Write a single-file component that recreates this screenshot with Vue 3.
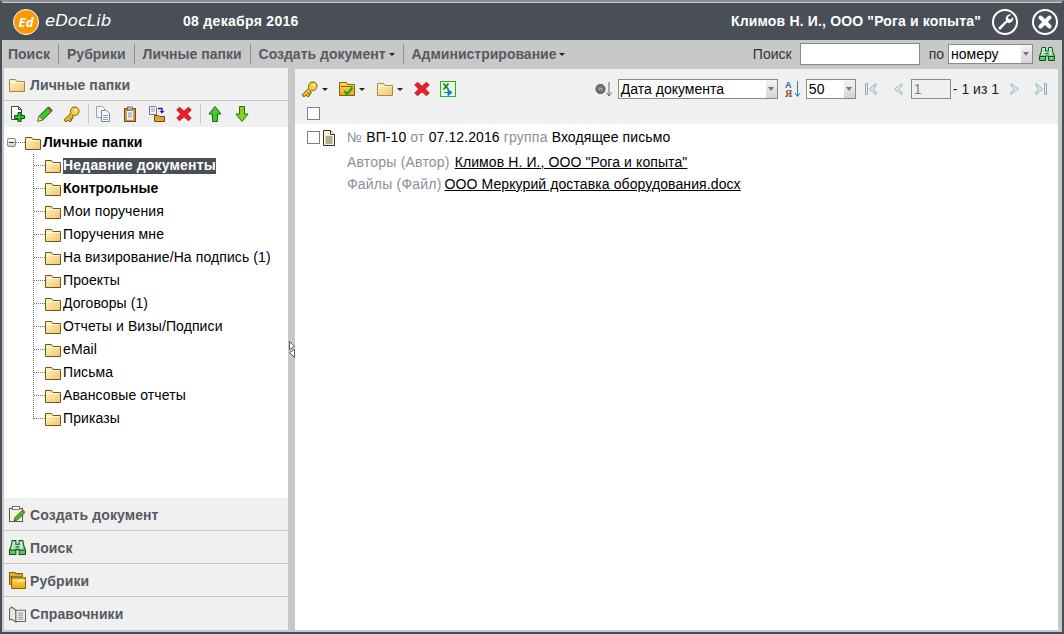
<script setup>
const folders = [
  { t: 'Недавние документы', c: 'sel' },
  { t: 'Контрольные', c: 'bold' },
  { t: 'Мои поручения' },
  { t: 'Поручения мне' },
  { t: 'На визирование/На подпись (1)' },
  { t: 'Проекты' },
  { t: 'Договоры (1)' },
  { t: 'Отчеты и Визы/Подписи' },
  { t: 'eMail' },
  { t: 'Письма' },
  { t: 'Авансовые отчеты' },
  { t: 'Приказы' }
]
const accordion = [
  { t: 'Создать документ', i: 'i-create' },
  { t: 'Поиск', i: 'i-bino' },
  { t: 'Рубрики', i: 'i-rubric' },
  { t: 'Справочники', i: 'i-book' }
]
</script>

<template>
  <div class="win">
    <svg class="sprite" aria-hidden="true">
      <defs>
        <linearGradient id="gf" x1="0" y1="0" x2="1" y2="1">
          <stop offset="0" stop-color="#fff6c0" />
          <stop offset="1" stop-color="#f4c470" />
        </linearGradient>
        <linearGradient id="gy" x1="0" y1="0" x2="0" y2="1">
          <stop offset="0" stop-color="#ffe25a" />
          <stop offset="1" stop-color="#e8a810" />
        </linearGradient>
        <linearGradient id="gb" x1="0" y1="0" x2="0" y2="1">
          <stop offset="0" stop-color="#d8f4dc" />
          <stop offset="1" stop-color="#58b868" />
        </linearGradient>
        <symbol id="i-folder" viewBox="0 0 16 16">
          <path d="M.5 14.500V2.500h6l1.500 2h7.500v10z" fill="url(#gf)" stroke="#6e5a18" />
          <path d="M1.500 5.500h13" stroke="#fffbe0" />
        </symbol>
        <symbol id="i-folder-light" viewBox="0 0 16 16">
          <path d="M.5 14.500V2.500h6l1.500 2h7.500v10z" fill="url(#gf)" stroke="#a08c48" />
          <path d="M1.500 5.500h13" stroke="#fffbe0" />
        </symbol>
        <symbol id="i-key" viewBox="0 0 16 16">
          <path d="M9 7L2 14M4 12l2 2M6 10l1.500 1.500" fill="none" stroke="#7a5c08" stroke-width="3.600" stroke-linecap="square" />
          <circle cx="10.800" cy="5.200" r="4.700" fill="#7a5c08" />
          <path d="M9 7L2 14M4 12l2 2M6 10l1.500 1.500" fill="none" stroke="#f2c22e" stroke-width="1.800" stroke-linecap="square" />
          <circle cx="10.800" cy="5.200" r="3.800" fill="#f7cf3e" />
          <circle cx="11.800" cy="4.200" r="1.200" fill="#fff6c4" />
        </symbol>
        <symbol id="i-pageplus" viewBox="0 0 16 16">
          <path d="M1.500 .5h7l3 3v10h-10z" fill="#fff" stroke="#444" />
          <path d="M8.500 .5v3h3" fill="none" stroke="#444" />
          <path d="M8 6.500h3v3h3.500v3H11V16H8v-3.500H4.500v-3H8z" fill="#2fc02f" stroke="#0a5a0a" />
        </symbol>
        <symbol id="i-pencil" viewBox="0 0 16 16">
          <path d="M.8 15.200l1.200-5L11 1.200l3.800 3.800-9 9z" fill="#45c02f" stroke="#146a10" />
          <path d="M11.800 .8l3.500 3.500-.8 1-3.500-3.500z" fill="#e84030" stroke="#902018" stroke-width=".7" />
          <path d="M.8 15.200l1.200-5 3.800 3.800z" fill="#f5dcb0" stroke="#7a6020" stroke-width=".6" />
        </symbol>
        <symbol id="i-copy" viewBox="0 0 16 16">
          <path d="M1.500 .5h6l2 2v9h-8z" fill="#f2f4f8" stroke="#9aa0a8" />
          <path d="M6.500 4.500h5l3 3v8h-8z" fill="#fff" stroke="#8088a0" />
          <path d="M8 9.500h5M8 11.500h5M8 13.500h5" stroke="#88a0c8" />
        </symbol>
        <symbol id="i-clip" viewBox="0 0 16 16">
          <rect x="2.500" y="2.500" width="11" height="13" fill="#d8963a" stroke="#7a4a10" />
          <rect x="4.500" y="4.500" width="7" height="9.500" fill="#fff" stroke="#b08040" stroke-width=".6" />
          <rect x="5.500" y="1" width="5" height="3" fill="#c0c0c0" stroke="#555" stroke-width=".7" />
          <path d="M6 7h4M6 9h4M6 11h4" stroke="#8088a0" />
        </symbol>
        <symbol id="i-paste" viewBox="0 0 16 16">
          <path d="M.5 .5h6l1 1v7h-7z" fill="#f2f4f8" stroke="#777" />
          <path d="M2 3h4M2 5h4" stroke="#88a0c8" />
          <path d="M9 2.500h4v3" fill="none" stroke="#1020a0" stroke-width="1.400" />
          <path d="M10.500 5h5l-2.500 2.500z" fill="#1020a0" />
          <path d="M5.500 9.500h4l1 1h5v5h-10z" fill="#e8a030" stroke="#70480c" />
        </symbol>
        <symbol id="i-x" viewBox="0 0 16 16">
          <path d="M3.500 1.200l4.500 4 4.500-4 2.800 2.800-4 4 4 4-2.800 2.800-4.500-4-4.500 4L.7 12l4-4-4-4z" fill="#e8202a" stroke="#b01018" stroke-width=".8" />
        </symbol>
        <symbol id="i-up" viewBox="0 0 16 16">
          <path d="M8 .5l6 7.500h-3.500v7.500h-5V8H2z" fill="#4ac82a" stroke="#146a10" />
        </symbol>
        <symbol id="i-down" viewBox="0 0 16 16">
          <path d="M8 15.500L14 8h-3.500V.5h-5V8H2z" fill="#86d024" stroke="#2a7010" />
        </symbol>
        <symbol id="i-foldercheck" viewBox="0 0 16 16">
          <path d="M.5 14.500V1.500h7l1 2h7v11z" fill="url(#gy)" stroke="#806010" />
          <path d="M2 5.500h12" stroke="#806010" />
          <path d="M5.500 10l2.500 3.500 5.500-7" fill="none" stroke="#2a9a28" stroke-width="2.200" />
        </symbol>
        <symbol id="i-excel" viewBox="0 0 16 16">
          <rect x=".5" y=".5" width="15" height="15" fill="#eafbe4" stroke="#28b028" />
          <path d="M3.500 2.500l5 6M8.500 2.500l-5 6" stroke="#108a18" stroke-width="1.800" />
          <path d="M4 11.500h6M8 8.500l4 3-4 3z" fill="#1878d8" stroke="#1878d8" />
        </symbol>
        <symbol id="i-bino" viewBox="0 0 16 16">
          <path d="M3 1.500h3.500v3.500h3V1.500H13l1 5 1.500 4v4h-6V10h-3v4.500H.5v-4L2 6.500z" fill="url(#gb)" stroke="#065a10" />
          <path d="M.5 10.500h6M9.500 10.500h6M6.500 7.500h3" stroke="#065a10" />
          <path d="M3 9l1-3M11 9l1-3" stroke="#fff" />
        </symbol>
        <symbol id="i-create" viewBox="0 0 17 17">
          <rect x=".5" y="2.500" width="13" height="13" fill="#fbf0dc" stroke="#555" />
          <rect x="3.500" y=".5" width="7" height="3" fill="#fff" stroke="#555" stroke-width=".8" />
          <path d="M5 15l1-3.500 7-7 2.500 2.500-7 7z" fill="#4ab82f" stroke="#14600e" stroke-width=".8" />
          <path d="M13 4.500l2.500 2.500 1-1L14 3.500z" fill="#e84030" />
        </symbol>
        <symbol id="i-rubric" viewBox="0 0 16 16">
          <path d="M.5 .5h5l1 1h6v3h-12z" fill="#e8b030" stroke="#8a6008" />
          <path d="M.5 4.500v7h2v-7z" fill="#e8b030" stroke="#8a6008" />
          <path d="M2.500 5.500h13v10h-13z" fill="url(#gy)" stroke="#8a6008" />
          <path d="M8 8.500h7" stroke="#fff6c0" />
        </symbol>
        <symbol id="i-book" viewBox="0 0 16 16">
          <path d="M.5 3l2-2 4 3v11l-4-2.500-2 .5z" fill="#e8e8e8" stroke="#666" />
          <path d="M6.500 4h9v10.500h-9z" fill="#f4f4f4" stroke="#666" />
          <path d="M8.500 6.500h5M8.500 8.500h5M8.500 10.500h5M8.500 12.500h5" stroke="#888" />
        </symbol>
        <symbol id="i-doc" viewBox="0 0 14 16">
          <path d="M1.500 .5h7l4 4v11h-11z" fill="#fdf4cf" stroke="#333" />
          <path d="M8.500 .5v4h4" fill="#fff" stroke="#333" />
          <path d="M3.500 7h7M3.500 9h7M3.500 11h7M3.500 13h7" stroke="#666" />
        </symbol>
        <symbol id="i-sortdate" viewBox="0 0 18 18">
          <circle cx="5.500" cy="9" r="4.500" fill="#777" stroke="#444" />
          <path d="M3.500 10c1-2 3-2 4 0" fill="none" stroke="#ccc" />
          <path d="M14 2v13M11.500 12.500L14 16l2.500-3.500" fill="none" stroke="#666" />
        </symbol>
        <symbol id="i-first" viewBox="0 0 14 14">
          <path d="M1.500 1.500h2v11h-2zM12 1.500L5.500 7l6.500 5.500V10L9 7l3-3z" fill="#e4eef4" stroke="#8fb0c4" />
        </symbol>
        <symbol id="i-prev" viewBox="0 0 12 14">
          <path d="M10 1.500L2.500 7l7.500 5.500V10L6.500 7 10 4z" fill="#e4eef4" stroke="#9ab4c4" />
        </symbol>
        <symbol id="i-next" viewBox="0 0 12 14">
          <path d="M2 1.500L9.500 7 2 12.500V10l3.500-3L2 4z" fill="#e4eef4" stroke="#9ab4c4" />
        </symbol>
        <symbol id="i-last" viewBox="0 0 14 14">
          <path d="M12.500 1.500h-2v11h2zM2 1.500L8.500 7 2 12.500V10l3-3-3-3z" fill="#e4eef4" stroke="#8fb0c4" />
        </symbol>
      </defs>
    </svg>

    <header class="head">
      <div class="logo">Ed</div>
      <div class="brand">eDocLib</div>
      <div class="date">08 декабря 2016</div>
      <div class="user">Климов Н. И., ООО "Рога и копыта"</div>
      <svg class="round wrench" viewBox="0 0 26 26">
        <circle cx="13" cy="13" r="12" fill="none" stroke="#fff" stroke-width="2" />
        <path d="M19.500 5.500a4.500 4.500 0 0 0-5.500 6L6.500 18.500a1.500 1.500 0 0 0 2 2L15 13.500a4.500 4.500 0 0 0 6-5.500l-2.500 2.500-2-.5-.5-2z" fill="#fff" />
      </svg>
      <svg class="round close" viewBox="0 0 26 26">
        <circle cx="13" cy="13" r="12" fill="none" stroke="#fff" stroke-width="2" />
        <path d="M8.500 8.500l9 9M17.500 8.500l-9 9" stroke="#fff" stroke-width="4" stroke-linecap="round" />
      </svg>
    </header>

    <nav class="nav">
      <a class="nav-item">Поиск</a>
      <a class="nav-item">Рубрики</a>
      <a class="nav-item">Личные папки</a>
      <a class="nav-item">Создать документ<i class="caret" /></a>
      <a class="nav-item last">Администрирование<i class="caret" /></a>
      <div class="nav-search">
        <span>Поиск</span>
        <input class="search-input" type="text" />
        <span>по</span>
        <div class="sel sel-num"><span>номеру</span><b class="sel-arrow" /></div>
        <svg class="ic"><use href="#i-bino" /></svg>
      </div>
    </nav>

    <main class="main">
      <aside class="left">
        <div class="left-head">
          <svg class="ic"><use href="#i-folder-light" /></svg>
          <span>Личные папки</span>
        </div>
        <div class="left-tools">
          <svg class="ic"><use href="#i-pageplus" /></svg>
          <svg class="ic"><use href="#i-pencil" /></svg>
          <svg class="ic"><use href="#i-key" /></svg>
          <i class="tsep" />
          <svg class="ic"><use href="#i-copy" /></svg>
          <svg class="ic"><use href="#i-clip" /></svg>
          <svg class="ic"><use href="#i-paste" /></svg>
          <svg class="ic"><use href="#i-x" /></svg>
          <i class="tsep" />
          <svg class="ic"><use href="#i-up" /></svg>
          <svg class="ic"><use href="#i-down" /></svg>
        </div>
        <div class="tree">
          <div class="root">
            <i class="minus" />
            <i class="root-dots" />
            <svg class="ic"><use href="#i-folder" /></svg>
            <span class="label bold">Личные папки</span>
          </div>
          <div class="kids">
            <div v-for="f in folders" :key="f.t" class="kid">
              <i class="kid-dots" />
              <svg class="ic"><use href="#i-folder" /></svg>
              <span class="label" :class="f.c">{{ f.t }}</span>
            </div>
          </div>
        </div>
        <div class="acc">
          <div v-for="a in accordion" :key="a.t" class="acc-item">
            <svg class="ic ic-acc"><use :href="'#' + a.i" /></svg>
            <span>{{ a.t }}</span>
          </div>
        </div>
      </aside>

      <div class="split">
        <svg width="6" height="17" viewBox="0 0 6 17">
          <path d="M.5 .5L5.500 5.500.5 8.500z" fill="#fff" stroke="#333" stroke-width=".8" />
          <path d="M5.500 8.500L.5 11.500l5 5z" fill="#fff" stroke="#333" stroke-width=".8" />
        </svg>
      </div>

      <section class="right">
        <div class="right-tools">
          <div class="tool-row">
            <svg class="ic"><use href="#i-key" /></svg><i class="caret tc" />
            <svg class="ic m1"><use href="#i-foldercheck" /></svg><i class="caret tc" />
            <svg class="ic m2"><use href="#i-folder-light" /></svg><i class="caret tc" />
            <svg class="ic m3"><use href="#i-x" /></svg>
            <svg class="ic m4"><use href="#i-excel" /></svg>
            <div class="pager">
              <svg class="ic sd" viewBox="0 0 18 18"><use href="#i-sortdate" /></svg>
              <div class="sel sel-date"><span>Дата документа</span><b class="sel-arrow" /></div>
              <svg class="az" width="16" height="18" viewBox="0 0 16 18">
                <text x="0" y="8" class="az-a">А</text>
                <text x="0" y="17" class="az-z">Я</text>
                <path d="M12.500 1v15M10 13l2.500 3.500L15 13" fill="none" stroke="#2a7ab8" />
              </svg>
              <div class="sel sel-size"><span>50</span><b class="sel-arrow" /></div>
              <svg class="pg p-first" viewBox="0 0 14 14"><use href="#i-first" /></svg>
              <svg class="pg p-prev" viewBox="0 0 12 14"><use href="#i-prev" /></svg>
              <input class="page-input" type="text" value="1" disabled />
              <span class="of">- 1 из 1</span>
              <svg class="pg p-next" viewBox="0 0 12 14"><use href="#i-next" /></svg>
              <svg class="pg p-last" viewBox="0 0 14 14"><use href="#i-last" /></svg>
            </div>
          </div>
          <div class="check-row"><i class="check" /></div>
        </div>

        <article class="doc">
          <div class="doc-line first">
            <i class="check" />
            <svg class="doc-ic"><use href="#i-doc" /></svg>
            <span class="m">№</span>&nbsp;<span>ВП-10</span>&nbsp;<span class="m">от</span>&nbsp;<span>07.12.2016</span>&nbsp;<span class="m">группа</span>&nbsp;<span>Входящее письмо</span>
          </div>
          <div class="doc-line">
            <span class="m">Авторы (Автор)</span>
            <a class="link gap5">Климов Н. И., ООО "Рога и копыта"</a>
          </div>
          <div class="doc-line">
            <span class="m">Файлы (Файл)</span>
            <a class="link gap3">ООО Меркурий доставка оборудования.docx</a>
          </div>
        </article>
      </section>
    </main>
  </div>
</template>

<style>
html, body { margin: 0; padding: 0; overflow: hidden; background: #fff; }
</style>

<style scoped>
.win {
  width: 1064px;
  height: 634px;
  box-sizing: border-box;
  border: 2px solid #4a4f57;
  border-top-color: #8d9196;
  background: #c8c8c8;
  display: flex;
  flex-direction: column;
  font: 14px/1.2 "Liberation Sans", Arial, sans-serif;
  color: #000;
  overflow: hidden;
}
.sprite { position: absolute; width: 0; height: 0; }
.ic { width: 16px; height: 16px; flex: none; display: block; }

.head {
  height: 38px;
  flex: none;
  background: #4a4f57;
  border-top: 1px solid #c8c8c8;
  box-sizing: border-box;
  display: flex;
  align-items: center;
  color: #fff;
  padding-left: 11px;
}
.logo {
  width: 24px;
  height: 24px;
  border-radius: 50%;
  border: 1px solid #fff;
  background: #fb9a00;
  color: #fff;
  font: italic bold 13px/24px "Open Sans", "DejaVu Sans", sans-serif;
  text-align: center;
  flex: none;
}
.brand {
  margin-left: 6px;
  width: 138px;
  font: italic 16.500px/1 "DejaVu Sans", sans-serif;
}
.date { font-weight: bold; letter-spacing: .3px; }
.user { margin-left: auto; font-weight: bold; letter-spacing: .16px; }
.round { width: 26px; height: 26px; flex: none; }
.round.wrench { margin-left: 11px; }
.round.close { margin-left: 14px; margin-right: 4px; }

.nav {
  height: 28px;
  flex: none;
  display: flex;
  align-items: center;
  color: #555a62;
  font-weight: bold;
}
.nav-item {
  padding: 1px 8px;
  height: 18px;
  display: flex;
  align-items: center;
  border-right: 1px solid #8d9196;
  white-space: nowrap;
}
.nav-item:first-child { padding-left: 6px; }
.nav-item.last { border-right: 0; }
.caret {
  display: inline-block;
  width: 0;
  height: 0;
  border-left: 3px solid transparent;
  border-right: 3px solid transparent;
  border-top: 3px solid #222;
  margin-left: 3px;
  flex: none;
}
.nav-search {
  margin-left: auto;
  display: flex;
  align-items: center;
  font-weight: normal;
  color: #333;
  padding-right: 7px;
}
.search-input {
  width: 120px;
  height: 22px;
  box-sizing: border-box;
  margin: 0 9px 0 8px;
  border: 1px solid #8a8a8a;
  background: #fff;
  padding: 0;
}
.sel {
  box-sizing: border-box;
  height: 20px;
  border: 1px solid #8a8a8a;
  background: #fff;
  display: flex;
  align-items: center;
  padding-left: 2px;
  color: #000;
  font-size: 14px;
  flex: none;
}
.sel span { flex: 1; }
.sel-arrow {
  width: 11px;
  height: 18px;
  flex: none;
  background: linear-gradient(#f4f4f4, #d4d4d4);
  position: relative;
}
.sel-arrow::after {
  content: "";
  position: absolute;
  left: 2px;
  top: 7px;
  border-left: 3.500px solid transparent;
  border-right: 3.500px solid transparent;
  border-top: 4px solid #777;
}
.sel-num { width: 85px; margin: 0 6px 0 4px; }

.main { flex: 1; min-height: 0; display: flex; padding-bottom: 2px; padding-left: 2px; padding-right: 4px; }
.left { width: 284px; flex: none; background: #fff; display: flex; flex-direction: column; }
.left-head {
  flex: none;
  background: #f0f0f0;
  border-bottom: 1px solid #c8c8c8;
  display: flex;
  align-items: center;
  padding: 2px 0 0 5px;
  height: 30px;
  gap: 5px;
  font-weight: bold;
  color: #555a62;
  letter-spacing: .1px;
}
.left-tools {
  height: 26px;
  flex: none;
  background: #f0f0f0;
  display: flex;
  align-items: center;
  padding-left: 6px;
  gap: 11px;
}
.tsep { width: 1px; height: 20px; background: #c8c8c8; margin: 0 -5px 0 -3px; flex: none; }
.tree { flex: 1; padding-top: 4px; position: relative; }
.root { height: 23px; display: flex; align-items: center; position: relative; padding-left: 21px; }
.minus {
  position: absolute;
  left: 3px;
  top: 7px;
  width: 9px;
  height: 9px;
  box-sizing: border-box;
  border: 1px solid #888;
  border-radius: 2px;
  background: linear-gradient(#fff, #ccc);
}
.minus::after { content: ""; position: absolute; left: 1px; right: 1px; top: 3px; height: 1px; background: #333; }
.root-dots { position: absolute; left: 12px; top: 11px; width: 9px; border-top: 1px dotted #777; }
.label { margin-left: 2px; white-space: nowrap; letter-spacing: .1px; }
.label.bold { font-weight: bold; letter-spacing: .03px; }
.label.sel {
  display: block;
  height: 16px;
  border: 0;
  padding: 0;
  background: #4a4f57;
  color: #fff;
  font-weight: bold;
  line-height: 15px;
  letter-spacing: .2px;
}
.kids { margin-left: 29px; border-left: 1px dotted #777; height: 265px; }
.kid { height: 23px; display: flex; align-items: center; padding-left: 11px; position: relative; }
.kid-dots { position: absolute; left: 0; top: 11px; width: 11px; border-top: 1px dotted #777; }

.acc { flex: none; background: #f0f0f0; }
.acc-item {
  height: 33px;
  box-sizing: border-box;
  border-bottom: 1px solid #c8c8c8;
  display: flex;
  align-items: center;
  padding: 2px 0 0 5px;
  gap: 5px;
  font-weight: bold;
  color: #555a62;
  letter-spacing: .1px;
}
.acc-item:last-child { border-bottom: 0; }
.ic-acc { width: 17px; height: 17px; margin-right: -1px; margin-top: -1px; }

.split { width: 7px; flex: none; display: flex; align-items: center; justify-content: center; }
.right { flex: 1; min-width: 0; margin-top: 1px; background: #fff; display: flex; flex-direction: column; }
.right-tools { height: 55px; flex: none; background: #f0f0f0; padding: 10px 10px 0 7px; box-sizing: border-box; }
.tool-row { display: flex; align-items: center; height: 20px; }
.tc { margin-left: 4px; }
.m1 { margin-left: 11px; }
.m2 { margin-left: 12px; }
.m3 { margin-left: 11px; }
.m4 { margin-left: 10px; }
.pager { margin-left: auto; display: flex; align-items: center; }
.sd { width: 18px; height: 18px; }
.sel-date { width: 160px; margin-left: 5px; }
.az { margin-left: 7px; flex: none; }
.az-a { font: bold 9px "Liberation Sans", sans-serif; fill: #2a6ab0; }
.az-z { font: bold 10px "Liberation Serif", serif; fill: #a04030; }
.sel-size { width: 50px; margin-left: 5px; }
.pg { width: 14px; height: 14px; flex: none; }
.p-first { margin-left: 8px; }
.p-prev { margin-left: 14px; width: 12px; }
.p-next { margin-left: 10px; width: 12px; }
.p-last { margin-left: 13px; }
.page-input {
  width: 40px;
  height: 20px;
  box-sizing: border-box;
  margin: 0 2px 0 7px;
  padding: 0 0 0 2px;
  border: 1px solid #8a8a8a;
  background: transparent;
  color: #808080;
  font: 14px "Liberation Sans", Arial, sans-serif;
}
.of { color: #222; white-space: nowrap; }
.check-row { padding: 8px 0 0 5px; }
.check {
  display: block;
  width: 13px;
  height: 13px;
  box-sizing: border-box;
  border: 1px solid #808080;
  background: #fff;
  flex: none;
}
.doc { padding: 0 0 0 12px; letter-spacing: .1px; }
.doc-line { display: flex; align-items: center; height: 22px; white-space: pre; padding-left: 40px; }
.doc-line.first { padding-left: 0; height: 27px; }
.doc-ic { width: 14px; height: 16px; margin: 0 11px 0 2px; flex: none; }
.m { color: #8a9099; letter-spacing: .2px; }
.link { color: #000; text-decoration: underline; }
.gap5 { margin-left: 5px; }
.gap3 { margin-left: 3px; }
</style>
